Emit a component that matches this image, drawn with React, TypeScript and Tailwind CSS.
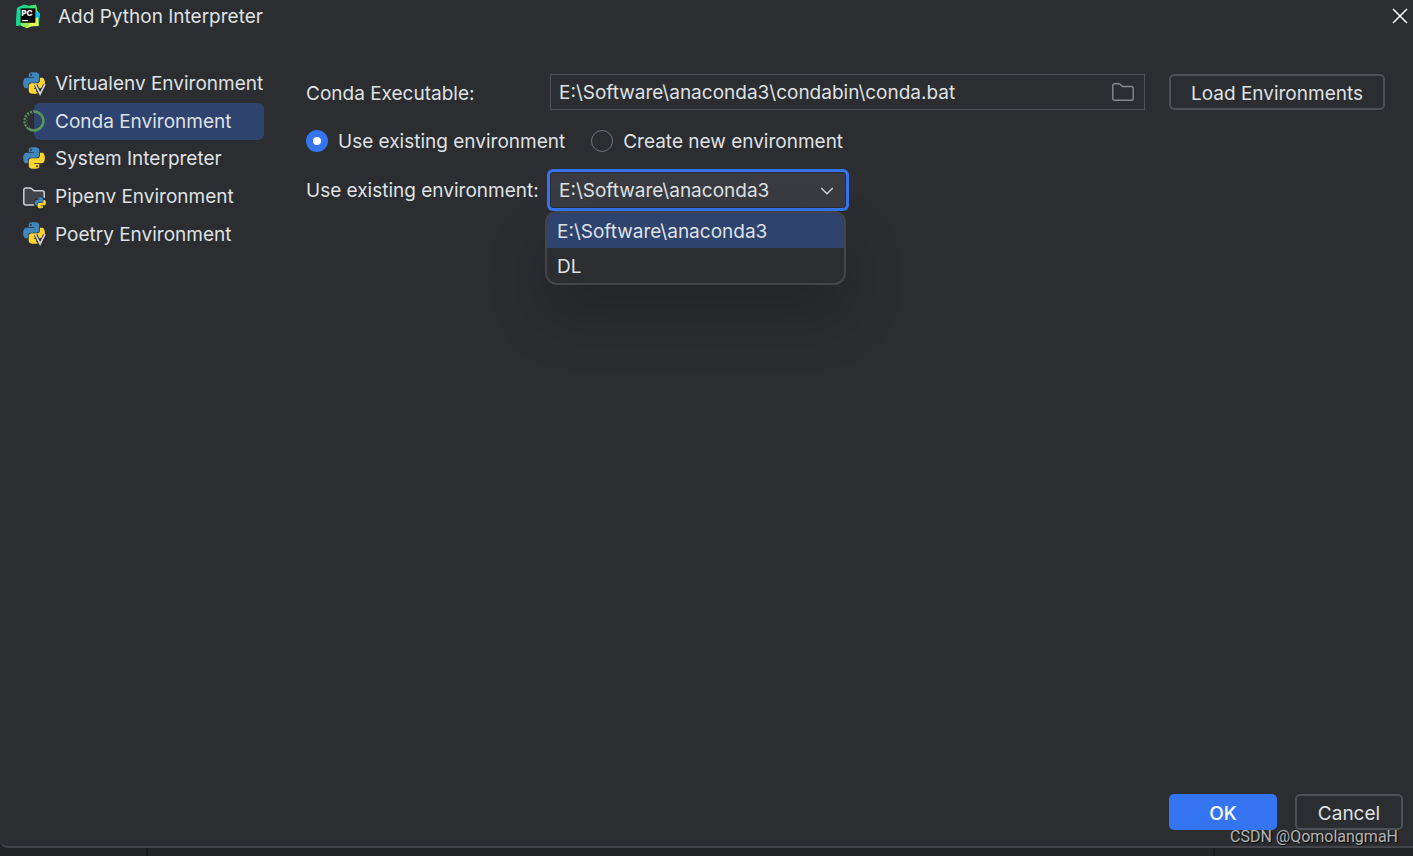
import { useState } from "react";

const SNAKE =
  "M14.25.18l.9.2.73.26.59.3.45.32.34.34.25.34.16.33.1.3.04.26.02.2-.01.13V8.5l-.05.63-.13.55-.21.46-.26.38-.3.31-.33.25-.35.19-.35.14-.33.1-.3.07-.26.04-.21.02H8.77l-.69.05-.59.14-.5.22-.41.27-.33.32-.27.35-.2.36-.15.37-.1.35-.07.32-.04.27-.02.21v3.06H3.17l-.21-.03-.28-.07-.32-.12-.35-.18-.36-.26-.36-.36-.35-.46-.32-.59-.28-.73-.21-.88-.14-1.05-.05-1.23.06-1.22.16-1.04.24-.87.32-.71.36-.57.4-.44.42-.33.42-.24.4-.16.36-.1.32-.05.24-.01h.16l.06.01h8.16v-.83H6.18l-.01-2.75-.02-.37.05-.34.11-.31.17-.28.25-.26.31-.23.38-.2.44-.18.51-.15.58-.12.64-.1.71-.06.77-.04.84-.02 1.27.05zm-6.3 1.98l-.23.33-.08.41.08.41.23.34.33.22.41.09.41-.09.33-.22.23-.34.08-.41-.08-.41-.23-.33-.33-.22-.41-.09-.41.09z";

function Snakes() {
  return (
    <>
      <path d={SNAKE} fill="#3f86bd" />
      <path d={SNAKE} fill="#ffd42e" transform="rotate(180 12 12)" />
    </>
  );
}

function PythonIcon() {
  return (
    <svg viewBox="0 0 24 24" className="size-6 shrink-0" aria-hidden="true">
      <g transform="translate(1.2 .2) scale(.9)">
        <Snakes />
      </g>
    </svg>
  );
}

function VirtualenvIcon() {
  return (
    <svg viewBox="0 0 24 24" className="size-6 shrink-0" aria-hidden="true">
      <g transform="translate(1.2 .2) scale(.9)">
        <Snakes />
      </g>
      <path d="M13.6 12.8l4.5 9.4 4.7-9.4" fill="none" stroke="#2b2d30" strokeWidth="3.6" />
      <path d="M13.2 12.2l4.9 9.8 4.9-9.8" fill="none" stroke="#d3d5db" strokeWidth="1.7" />
    </svg>
  );
}

function CondaIcon() {
  return (
    <svg viewBox="0 0 24 24" className="size-6 shrink-0" aria-hidden="true">
      <g fill="none" stroke="#57965c">
        <path d="M12 2.6a9.4 9.4 0 1 1-5.7 16.9" strokeWidth="2.6" />
        <path d="M6.2 19.6A9.6 9.6 0 0 1 12 2.4" strokeWidth="2.2" strokeDasharray="2 1.2" />
        <path d="M7.4 17.8A7.8 7.8 0 0 1 10.6 4.4" strokeWidth="1" strokeDasharray="1.2 1.9" />
      </g>
    </svg>
  );
}

function PipenvIcon() {
  return (
    <svg viewBox="0 0 24 24" className="size-6 shrink-0" aria-hidden="true">
      <path
        d="M1.8 5A2 2 0 0 1 3.8 3h4.4a2 2 0 0 1 1.3.5l2.4 2.2h8.3a2 2 0 0 1 2 2V18a2 2 0 0 1-2 2H3.8a2 2 0 0 1-2-2z"
        fill="#43454a"
        stroke="#ced0d6"
        strokeWidth="1.5"
      />
      <circle cx="18.4" cy="18" r="6.6" fill="#2b2d30" />
      <g transform="translate(12.8 12.2) scale(.46)">
        <Snakes />
      </g>
    </svg>
  );
}

function PyCharmIcon() {
  return (
    <svg viewBox="0 0 24 24" className="size-6 shrink-0" aria-hidden="true">
      <path d="M1 4l7-3.6 5 1.4L20 1l1.4 6L24 9.6 22.6 22l-7 .2-4.4 1.8L5 21.4 0 22z" fill="#21d789" />
      <path d="M13 2l7-1.4 1.4 7L20 14z" fill="#48e56c" />
      <path d="M20 8l4 1.6-2 6.4-3-1z" fill="#07c3f2" />
      <path d="M1 4l4-2v10L0 22z" fill="#16d79a" />
      <path d="M5 19l14.4-5 2.6-.6L22.6 22l-7 .2-4.4 1.8L5 21.4z" fill="#e8f84a" />
      <path d="M5 19h9l-3 5-6-2.6z" fill="#8cec5c" />
      <path d="M4.6 4.4h14.8v14.4H4.6z" fill="#000" />
      <text x="5.2" y="11.8" fontSize="8.2" fontWeight="800" fontFamily="Inter, sans-serif" fill="#fff">
        PC
      </text>
      <path d="M6.2 16h5.6v1.2H6.2z" fill="#fff" />
    </svg>
  );
}

const kinds = [
  { name: "Virtualenv Environment", Icon: VirtualenvIcon },
  { name: "Conda Environment", Icon: CondaIcon },
  { name: "System Interpreter", Icon: PythonIcon },
  { name: "Pipenv Environment", Icon: PipenvIcon },
  { name: "Poetry Environment", Icon: VirtualenvIcon },
];

const environments = ["E:\\Software\\anaconda3", "DL"];

const radioClass =
  "size-[22px] shrink-0 appearance-none rounded-full border border-[#6f737a] checked:border-7 checked:border-[#3574f0] checked:bg-white";

export default function App() {
  const [kind, setKind] = useState("Conda Environment");
  const [mode, setMode] = useState("existing");
  const [env, setEnv] = useState(environments[0]);

  return (
    <div className="flex min-h-screen flex-col bg-[#222326] font-['Inter',sans-serif] text-[19px] leading-[25px] text-[#dfe1e5]">
      <div className="flex grow flex-col rounded-bl-lg border-b-2 border-[#43454a] bg-[#2b2d30]">
        <header className="flex h-8 items-center pr-1 pl-4">
          <PyCharmIcon />
          <h1 className="ml-[18px] grow">Add Python Interpreter</h1>
          <button type="button" aria-label="Close">
            <svg viewBox="0 0 18 18" className="size-[18px]" aria-hidden="true">
              <path d="M2 2l14 14M16 2L2 16" fill="none" stroke="#fff" strokeWidth="1.5" />
            </svg>
          </button>
        </header>

        <div className="flex grow pt-[33px]">
          <nav className="w-[306px] shrink-0 pl-[22px]">
            <ul className="grid h-[188px] grid-rows-5">
              {kinds.map(({ name, Icon }) => (
                <li key={name} className="flex items-center">
                  <span className="z-10 -mr-3">
                    <Icon />
                  </span>
                  <button
                    type="button"
                    onClick={() => setKind(name)}
                    className={
                      name === kind
                        ? "h-full w-[230px] rounded-md bg-[#2e436e] pl-[21px] text-left whitespace-nowrap"
                        : "h-full w-[230px] rounded-md pl-[21px] text-left whitespace-nowrap"
                    }
                  >
                    {name}
                  </button>
                </li>
              ))}
            </ul>
          </nav>

          <form className="flex grow flex-col gap-5 pt-[9px] pr-7" onSubmit={(e) => e.preventDefault()}>
            <div className="flex items-center">
              <label htmlFor="conda" className="w-[244px] shrink-0 pt-0.5">
                Conda Executable:
              </label>
              <div className="flex h-9 grow items-center border border-[#4e5157] pr-2.5 pl-2">
                <input
                  id="conda"
                  type="text"
                  defaultValue={"E:\\Software\\anaconda3\\condabin\\conda.bat"}
                  className="min-w-0 grow bg-transparent outline-none"
                />
                <button type="button" aria-label="Browse">
                  <svg viewBox="0 0 22 18" className="h-[18px] w-[22px]" aria-hidden="true">
                    <path
                      d="M.8 2.6A1.8 1.8 0 0 1 2.6.8h4.2a2 2 0 0 1 1.3.5l2.4 2.2h8.9a1.8 1.8 0 0 1 1.8 1.8v10.1a1.8 1.8 0 0 1-1.8 1.8H2.6a1.8 1.8 0 0 1-1.8-1.8z"
                      fill="none"
                      stroke="#868a91"
                      strokeWidth="1.4"
                    />
                  </svg>
                </button>
              </div>
              <button type="button" className="ml-6 h-9 rounded-[5px] border-2 border-[#4e5157] px-5 pt-0.5">
                Load Environments
              </button>
            </div>

            <div className="flex h-[22px] items-center gap-[26px]">
              <label className="flex items-center gap-2.5">
                <input
                  type="radio"
                  name="mode"
                  className={radioClass}
                  checked={mode === "existing"}
                  onChange={() => setMode("existing")}
                />
                Use existing environment
              </label>
              <label className="flex items-center gap-2.5">
                <input
                  type="radio"
                  name="mode"
                  className={radioClass}
                  checked={mode === "new"}
                  onChange={() => setMode("new")}
                />
                Create new environment
              </label>
            </div>

            <div className="flex items-center">
              <label htmlFor="env" className="w-[244px] shrink-0 whitespace-nowrap">
                Use existing environment:
              </label>
              <div className="relative w-[296px]">
                <select
                  id="env"
                  value={env}
                  onChange={(e) => setEnv(e.target.value)}
                  className="block h-9 w-full appearance-none rounded-[3px] border border-[#2b2d30] bg-[#393b40] pl-2 ring-3 ring-[#3574f0] outline-none"
                >
                  {environments.map((e) => (
                    <option key={e}>{e}</option>
                  ))}
                </select>
                <svg
                  viewBox="0 0 14 8"
                  className="pointer-events-none absolute top-[15px] right-3 h-2 w-3.5"
                  aria-hidden="true"
                >
                  <path d="M1.2 1l5.8 5.8L12.8 1" fill="none" stroke="#ced0d6" strokeWidth="1.5" />
                </svg>
                <ul
                  role="listbox"
                  aria-label="Environments"
                  className="absolute top-[39px] -left-[5px] w-[301px] overflow-hidden rounded-xl border-2 border-[#43454a] bg-[#2b2d30] shadow-[0_30px_60px_rgba(0,0,0,0.2)]"
                >
                  {environments.map((e) => (
                    <li
                      key={e}
                      role="option"
                      aria-selected={e === env}
                      onClick={() => setEnv(e)}
                      className="flex h-[35px] items-center pt-0.5 pl-2.5 aria-selected:bg-[#2e436e]"
                    >
                      {e}
                    </li>
                  ))}
                </ul>
              </div>
            </div>
          </form>
        </div>

        <footer className="flex justify-end gap-[18px] pr-2.5 pb-4">
          <button type="button" className="h-9 w-[108px] rounded-[5px] bg-[#3574f0] pt-0.5 font-medium text-white">
            OK
          </button>
          <button type="button" className="h-9 w-[108px] rounded-[5px] border-2 border-[#4e5157] pt-0.5">
            Cancel
          </button>
        </footer>
      </div>

      <div className="flex h-2 justify-between pr-[198px] pl-[146px]">
        <span className="w-0.5 bg-[#18191b]" />
        <span className="w-0.5 bg-[#18191b]" />
      </div>

      <p className="absolute right-[15px] bottom-[7px] font-['Roboto',sans-serif] text-[16px] text-[#b4b5b7] [text-shadow:1px_1px_1px_#000]">
        CSDN @QomolangmaH
      </p>
    </div>
  );
}
